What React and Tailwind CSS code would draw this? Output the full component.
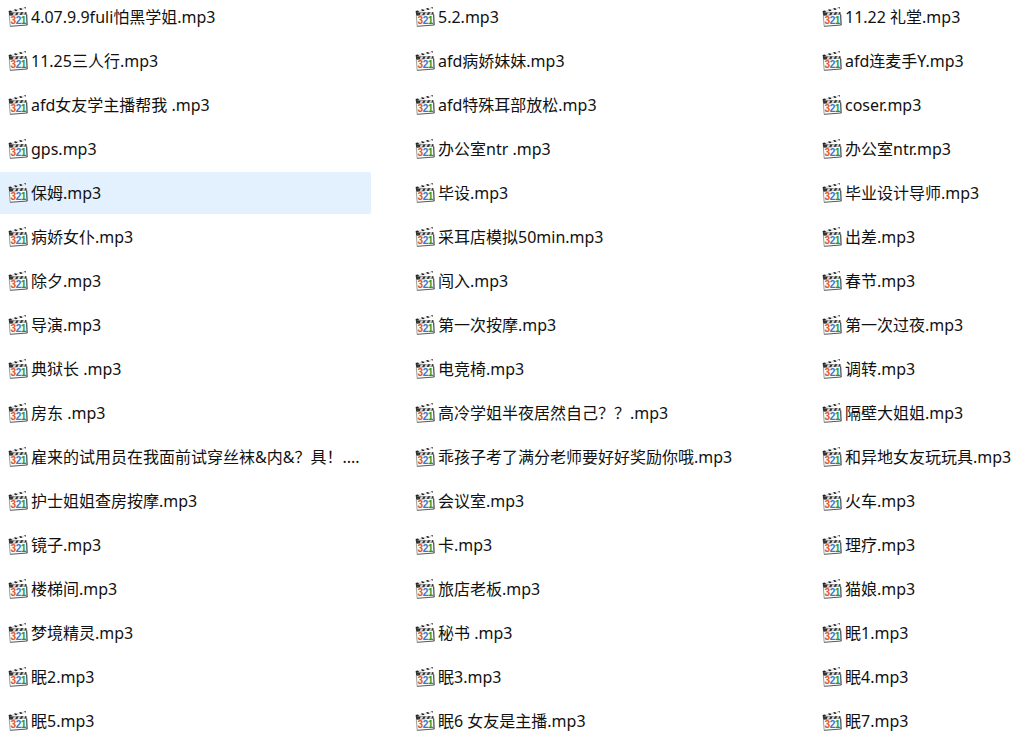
import React, { useState } from 'react';
import clsx from 'clsx';

const files = [
  '4.07.9.9fuli怕黑学姐.mp3', '5.2.mp3', '11.22 礼堂.mp3',
  '11.25三人行.mp3', 'afd病娇妹妹.mp3', 'afd连麦手Y.mp3',
  'afd女友学主播帮我 .mp3', 'afd特殊耳部放松.mp3', 'coser.mp3',
  'gps.mp3', '办公室ntr .mp3', '办公室ntr.mp3',
  '保姆.mp3', '毕设.mp3', '毕业设计导师.mp3',
  '病娇女仆.mp3', '采耳店模拟50min.mp3', '出差.mp3',
  '除夕.mp3', '闯入.mp3', '春节.mp3',
  '导演.mp3', '第一次按摩.mp3', '第一次过夜.mp3',
  '典狱长 .mp3', '电竞椅.mp3', '调转.mp3',
  '房东 .mp3', '高冷学姐半夜居然自己？？.mp3', '隔壁大姐姐.mp3',
  '雇来的试用员在我面前试穿丝袜&内&？具！....', '乖孩子考了满分老师要好好奖励你哦.mp3', '和异地女友玩玩具.mp3',
  '护士姐姐查房按摩.mp3', '会议室.mp3', '火车.mp3',
  '镜子.mp3', '卡.mp3', '理疗.mp3',
  '楼梯间.mp3', '旅店老板.mp3', '猫娘.mp3',
  '梦境精灵.mp3', '秘书 .mp3', '眠1.mp3',
  '眠2.mp3', '眠3.mp3', '眠4.mp3',
  '眠5.mp3', '眠6 女友是主播.mp3', '眠7.mp3',
];

// Clapperboard with the 3-2-1 countdown
function ClapperIcon() {
  return (
    <svg viewBox="0 0 20 20" className="size-5 shrink-0" aria-hidden="true">
      {/* Raised arm */}
      <path d="M0.6 3.9 L17.6 0 L18 1.8 L1 6z" fill="#e4e4e4" />
      <path d="M0.6 3.9 L2.6 3.4 L4.4 5.1 L1 6z M5.8 2.8 L8 2.2 L9.6 3.8 L7.6 4.3z M11 1.6 L13 1.1 L14.6 2.6 L12.6 3.1z M16 0.4 L17.6 0 L18 1.8z" fill="#222" />
      {/* Board */}
      <path d="M1 6 L18.6 5.6 L19 18 L2.2 19.4z" fill="#fbfbfb" />
      <path d="M0.8 5.6 L18.4 5 L18.6 7.6 L1.2 8.8z" fill="#333" />
      <path d="M5.8 5.5 L8.4 5.4 L7 8.3 L4.6 8.4z M10.6 5.3 L13 5.2 L11.6 7.9 L9.4 8.1z M15.2 5.2 L17.4 5.1 L16.2 7.7 L14 7.8z" fill="#d6d6d6" />
      <path d="M1.3 8.5 L2.2 19.4" stroke="#888" strokeWidth="0.8" />
      <path d="M18.7 7.4 L19.1 18" stroke="#222" strokeWidth="1" />
      <path d="M2.2 19.3 L19.3 18" stroke="#444" strokeWidth="0.9" />
      <g fontFamily="Liberation Sans, sans-serif" fontSize="10" fontWeight="bold">
        <text x="2.4" y="17.4" fill="#dd5522">3</text>
        <text x="7.8" y="17.1" fill="#3478cc">2</text>
        <text x="12.8" y="16.7" fill="#259c2c">1</text>
      </g>
    </svg>
  );
}

export default function App() {
  const [selected, setSelected] = useState('保姆.mp3');

  return (
    <main className="h-screen overflow-hidden bg-white font-['Noto_Sans','Noto_Sans_CJK_SC',sans-serif] text-base text-[#111]">
      <ul className="-mt-1 grid grid-cols-[53fr_53fr_30fr] gap-x-9 gap-y-0.5">
        {files.map((name) => (
          <li key={name} className="min-w-0">
            <button
              type="button"
              onClick={() => setSelected(name)}
              className={clsx(
                'flex h-[42px] w-full items-center gap-[3px] rounded-r-xs pl-2 text-left',
                selected === name && 'bg-[#e3f1fe]'
              )}
            >
              <ClapperIcon />
              <span className="truncate">{name}</span>
            </button>
          </li>
        ))}
      </ul>
    </main>
  );
}
